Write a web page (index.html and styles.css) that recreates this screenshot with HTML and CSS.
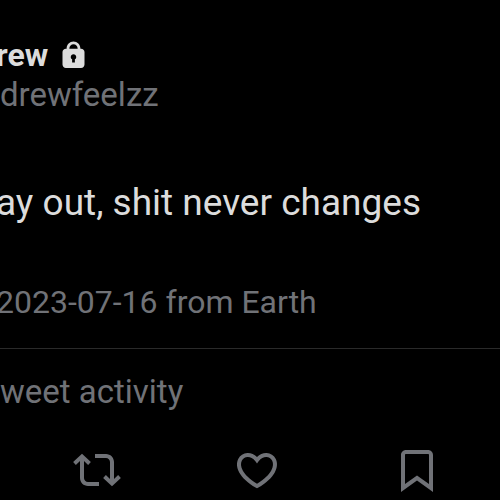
FILE: index.html
```
<!DOCTYPE html>
<html lang="en">
<head>
  <meta charset="UTF-8">
  <meta name="viewport" content="width=device-width, initial-scale=1.0">
  <title>Tweet</title>
  <link rel="stylesheet" href="styles.css">
</head>
<body>
  <article class="tweet">
    <header class="author">
      <div class="name">
        <span>rew</span>
        <svg class="lock" viewBox="0 0 24 24" role="img" aria-label="Protected account"><path d="M17.5 7H17v-.25c0-2.76-2.24-5-5-5s-5 2.24-5 5V7h-.5C5.12 7 4 8.12 4 9.5v9C4 19.88 5.12 21 6.5 21h11c1.39 0 2.5-1.12 2.5-2.5v-9C20 8.12 18.89 7 17.5 7zM13 14.73V17h-2v-2.27c-.59-.34-1-.99-1-1.73 0-1.1.9-2 2-2 1.11 0 2 .9 2 2 0 .74-.4 1.39-1 1.73zM15 7H9v-.25c0-1.66 1.35-3 3-3 1.66 0 3 1.34 3 3V7z"/></svg>
      </div>
      <div class="handle">drewfeelzz</div>
    </header>
    <p class="text">ay out, shit never changes</p>
    <p class="meta">2023-07-16 from Earth</p>
    <a class="activity" href="#">weet activity</a>
    <div class="actions">
      <button type="button" aria-label="Retweet">
        <svg viewBox="0 0 24 24"><path d="M4.5 3.88l4.432 4.14-1.364 1.46L5.5 7.55V16c0 1.1.896 2 2 2H13v2H7.5c-2.209 0-4-1.79-4-4V7.55L1.432 9.48.068 8.02 4.5 3.88zM16.5 6H11V4h5.5c2.209 0 4 1.79 4 4v8.45l2.068-1.93 1.364 1.46-4.432 4.14-4.432-4.14 1.364-1.46 2.068 1.93V8c0-1.1-.896-2-2-2z"/></svg>
      </button>
      <button type="button" aria-label="Like">
        <svg viewBox="0 0 24 24"><path d="M16.697 5.5c-1.222-.06-2.679.51-3.89 2.16l-.805 1.09-.806-1.09C9.984 6.01 8.526 5.44 7.304 5.5c-1.243.07-2.349.78-2.91 1.91-.552 1.12-.633 2.78.479 4.82 1.074 1.97 3.257 4.27 7.129 6.61 3.87-2.34 6.052-4.64 7.126-6.61 1.111-2.04 1.03-3.7.477-4.82-.561-1.13-1.666-1.84-2.908-1.91zm4.187 7.69c-1.351 2.48-4.001 5.12-8.379 7.67l-.503.3-.504-.3c-4.379-2.55-7.029-5.19-8.382-7.67-1.36-2.5-1.41-4.86-.514-6.67.887-1.79 2.647-2.91 4.601-3.01 1.651-.09 3.368.56 4.798 2.01 1.429-1.45 3.146-2.1 4.796-2.01 1.954.1 3.714 1.22 4.601 3.01.896 1.81.846 4.17-.514 6.67z"/></svg>
      </button>
      <button type="button" aria-label="Bookmark">
        <svg viewBox="0 0 24 24"><path d="M4 4.5C4 3.12 5.119 2 6.5 2h11C18.881 2 20 3.12 20 4.5v18.44l-8-5.71-8 5.71V4.5zM6.5 4c-.276 0-.5.22-.5.5v14.56l6-4.29 6 4.29V4.5c0-.28-.224-.5-.5-.5h-11z"/></svg>
      </button>
    </div>
  </article>
</body>
</html>
```
FILE: styles.css
```
body {
  margin: 0;
  background: #000;
  color: #dcdcdc;
  font-family: Roboto, "Liberation Sans", sans-serif;
  font-size: 32px;
  line-height: 40px;
  overflow-x: hidden;
}
.tweet {
  padding-top: 35px;
}
.tweet p {
  margin: 0;
}
.name {
  display: flex;
  align-items: center;
  gap: 9px;
  margin-left: -4px;
  font-weight: 700;
}
.lock {
  width: 33px;
  height: 33px;
  fill: currentColor;
}
.handle,
.meta,
.activity {
  color: #707277;
}
.handle,
.activity {
  font-size: 33px;
}
.tweet .text {
  margin: 64px 0 0 -4px;
  font-size: 37px;
  line-height: 48px;
}
.tweet .meta {
  padding: 55px 0 26px;
  border-bottom: 1px solid #2a2a2a;
  text-indent: -4px;
}
.activity {
  display: block;
  margin-top: 23px;
  text-decoration: none;
}
.actions {
  display: grid;
  grid-template-columns: repeat(3, 1fr);
  justify-items: center;
  margin-top: 34px;
  padding: 0 3px 0 17px;
}
.actions button {
  padding: 0;
  background: none;
  border: none;
  color: #707277;
  cursor: pointer;
}
.actions svg {
  display: block;
  width: 48px;
  height: 48px;
  fill: currentColor;
}
```
